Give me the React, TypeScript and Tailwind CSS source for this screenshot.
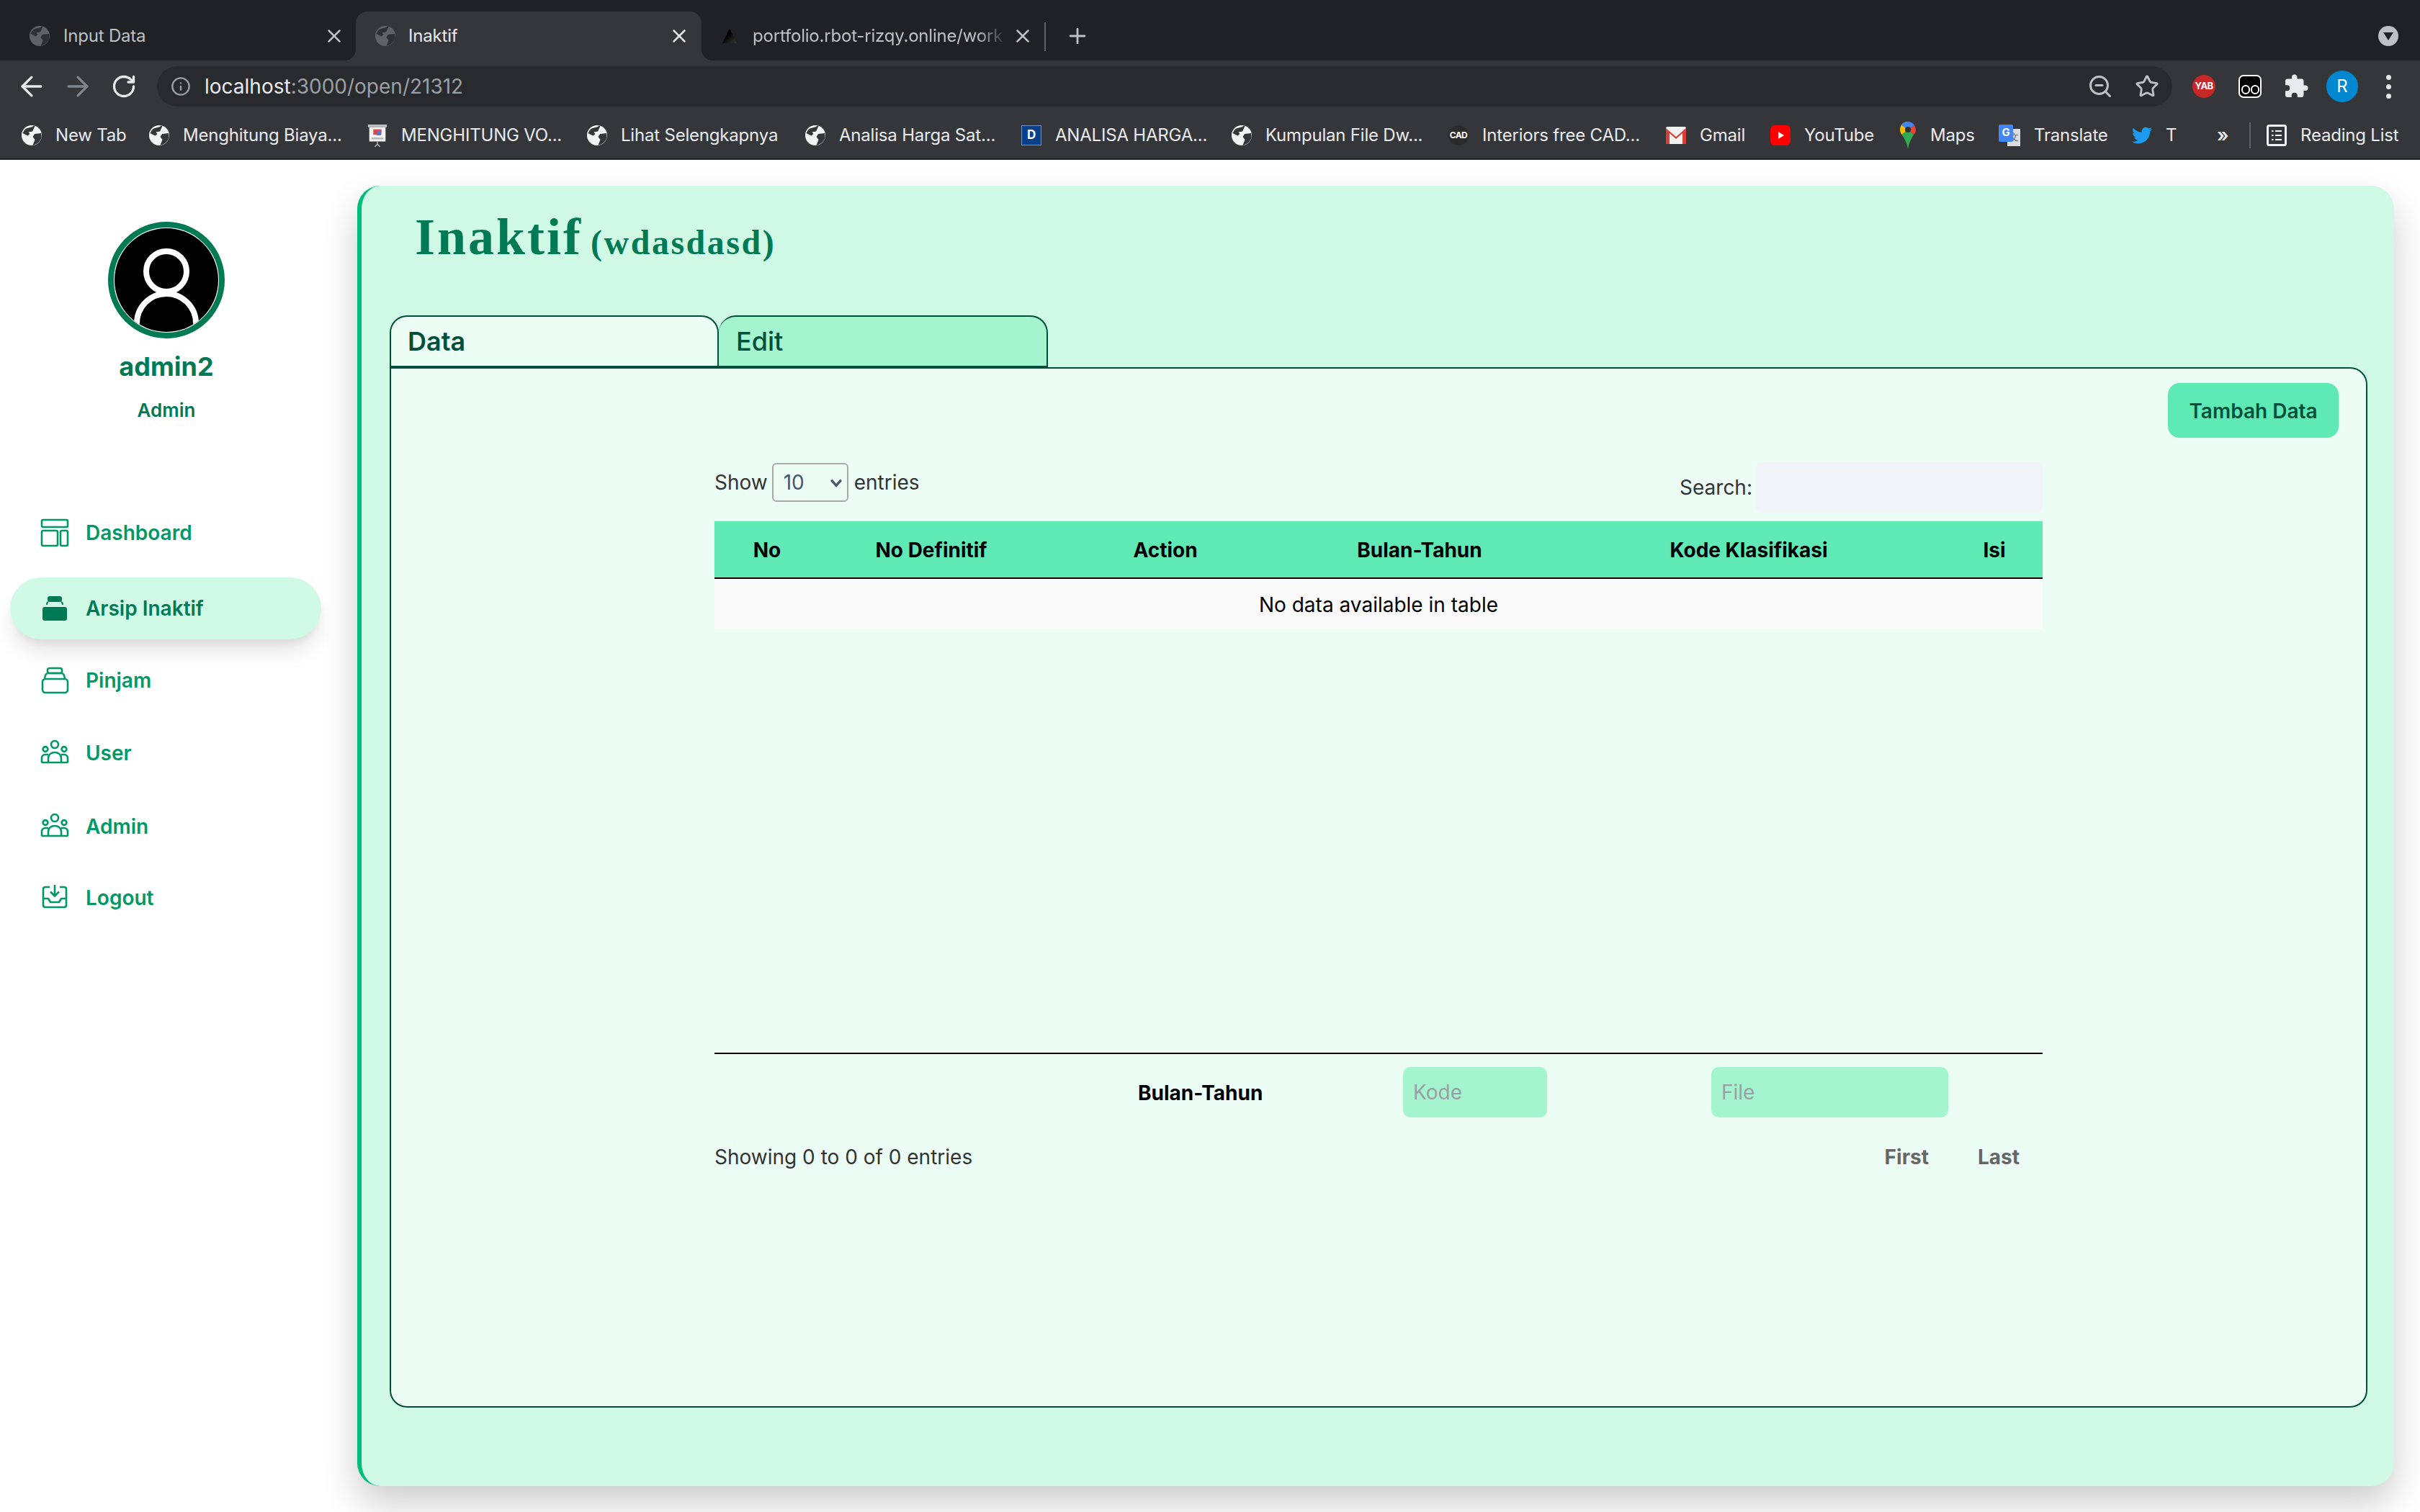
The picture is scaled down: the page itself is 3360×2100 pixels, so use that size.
import React from 'react';
import { ArrowLeft, ArrowRight, Info, Plus, RotateCw, Star, X, ZoomOut } from 'lucide-react';
import { FaTwitter } from 'react-icons/fa';

function Globe({ dim }: { dim?: boolean }) {
  return (
    <svg viewBox="0 0 28 28" className="w-[28px] h-[28px] shrink-0">
      <circle cx="14" cy="14" r="14" fill={dim ? '#5f6368' : '#f1f3f4'} />
      <path d="M17 0.6 C14 3.5 9 3 5 5.5 C3.5 7 2.5 9 1.5 11 L8.5 14.5 L11.5 12 L9.5 9.5 L15 8.5 L18.5 1 Z" fill={dim ? '#2f3033' : '#35363a'} />
      <path d="M27.2 11 L18 12 L15.5 16 L18.5 20 L15.5 27.8 C21 27 26 23 27.6 17 Z" fill={dim ? '#2f3033' : '#35363a'} />
    </svg>
  );
}

function BrowserTab({ title, active, icon, fade }: { title: string; active?: boolean; icon: React.ReactNode; fade?: boolean }) {
  return (
    <div className={active ? 'relative w-[480px] h-[68px] flex items-center gap-[18px] pl-[27px] pr-[16px] bg-[#35363a] rounded-t-[16px] text-[#e8eaed]' : fade ? 'relative w-[476px] h-[68px] flex items-center gap-[18px] pl-[25px] pr-[15px] text-[#bdc1c6]' : 'relative w-[480px] h-[68px] flex items-center gap-[19px] pl-[27px] pr-[15px] text-[#bdc1c6]'}>
      {active && <span className="absolute bottom-0 -left-[16px] w-[16px] h-[16px] bg-[radial-gradient(circle_at_0_0,#202124_16px,#35363a_16.5px)]" />}
      {active && <span className="absolute bottom-0 -right-[16px] w-[16px] h-[16px] bg-[radial-gradient(circle_at_100%_0,#202124_16px,#35363a_16.5px)]" />}
      {icon}
      <span className={fade ? 'flex-1 min-w-0 -mr-[12px] overflow-hidden whitespace-nowrap text-[24px] tracking-[-0.2px] [mask-image:linear-gradient(to_right,black_88%,transparent)]' : 'flex-1 min-w-0 overflow-hidden whitespace-nowrap text-[24px] tracking-[-0.2px]'}>{title}</span>
      <X size={30} strokeWidth={2} className="shrink-0" />
    </div>
  );
}

function TabStrip() {
  return (
    <div className="h-[84px] bg-[#202124] flex items-start pt-[16px] pl-[14px]">
      <BrowserTab title="Input Data" icon={<Globe dim />} />
      <BrowserTab title="Inaktif" active icon={<Globe dim />} />
      <BrowserTab
        title="portfolio.rbot-rizqy.online/work"
        fade
        icon={
          <svg viewBox="0 0 28 28" className="w-[28px] h-[28px] shrink-0">
            <defs>
              <linearGradient id="vercel" x1="0" y1="0" x2="1" y2="1">
                <stop offset="0.4" stopColor="#000" />
                <stop offset="1" stopColor="#3a3a3a" />
              </linearGradient>
            </defs>
            <polygon points="14,4 24,24 4,24" fill="url(#vercel)" />
          </svg>
        }
      />
      <div className="w-[2px] h-[40px] mt-[15px] bg-[#5f6368]" />
      <Plus size={34} strokeWidth={2} className="ml-[27px] mt-[17px] text-[#bdc1c6]" />
      <div className="ml-auto mr-[30px] mt-[20px] w-[28px] h-[28px] rounded-full bg-[#bdc1c6] flex items-center justify-center">
        <div className="w-0 h-0 border-l-[7px] border-r-[7px] border-t-[11px] border-l-transparent border-r-transparent border-t-[#202124]" />
      </div>
    </div>
  );
}

function Toolbar() {
  return (
    <div className="h-[64px] bg-[#35363a] pt-[8px] pl-[12px] pr-[12px] flex items-center">
      <div className="w-[64px] flex justify-center text-[#e8eaed]"><ArrowLeft size={44} strokeWidth={1.8} /></div>
      <div className="w-[64px] flex justify-center text-[#80868b]"><ArrowRight size={44} strokeWidth={1.8} /></div>
      <div className="w-[64px] flex justify-center text-[#e8eaed]"><RotateCw size={36} strokeWidth={2.2} /></div>
      <div className="ml-[14px] flex-1 h-[56px] rounded-full bg-[#292a2d] flex items-center pl-[19px] pr-[18px]">
        <Info size={28} strokeWidth={2} className="text-[#9aa0a6]" />
        <span className="ml-[19px] text-[28px] text-[#e8eaed]">localhost<span className="text-[#9aa0a6]">:3000/open/21312</span></span>
        <ZoomOut size={36} strokeWidth={2} className="ml-auto text-[#bdc1c6]" />
        <Star size={34} strokeWidth={2} className="ml-[30px] text-[#bdc1c6]" />
      </div>
      <div className="ml-[12px] w-[64px] flex justify-center">
        <div className="w-[32px] h-[32px] rounded-full bg-[#c62828] flex items-center justify-center text-[13px] font-bold text-white tracking-tighter">YAB</div>
      </div>
      <div className="w-[64px] flex justify-center">
        <div className="w-[32px] h-[32px] rounded-[7px] bg-black border-2 border-white flex items-end justify-center gap-[1px] pb-[3px]">
          <span className="w-[12px] h-[13px] rounded-full border-2 border-white" />
          <span className="w-[12px] h-[13px] rounded-full border-2 border-white" />
        </div>
      </div>
      <div className="w-[64px] flex justify-center">
        <svg viewBox="0 0 24 24" className="w-[36px] h-[36px]" fill="#e8eaed">
          <path d="M20.5 11H19V7a2 2 0 0 0-2-2h-4V3.5a2.5 2.5 0 0 0-5 0V5H4a2 2 0 0 0-2 2v3.8h1.5a2.7 2.7 0 0 1 0 5.4H2V20a2 2 0 0 0 2 2h3.8v-1.5a2.7 2.7 0 0 1 5.4 0V22H17a2 2 0 0 0 2-2v-4h1.5a2.5 2.5 0 0 0 0-5z" />
        </svg>
      </div>
      <div className="w-[64px] flex justify-center">
        <div className="w-[44px] h-[44px] rounded-full bg-[#0288d1] flex items-center justify-center text-[24px] text-white">R</div>
      </div>
      <div className="w-[64px] flex flex-col items-center gap-[6px]">
        <span className="w-[7px] h-[7px] rounded-full bg-[#e8eaed]" />
        <span className="w-[7px] h-[7px] rounded-full bg-[#e8eaed]" />
        <span className="w-[7px] h-[7px] rounded-full bg-[#e8eaed]" />
      </div>
    </div>
  );
}

const slideIcon = (
  <svg viewBox="0 0 28 34" className="w-[28px] h-[32px] shrink-0">
    <rect x="0" y="1" width="28" height="4" fill="#bdbdbd" />
    <rect x="2" y="5" width="24" height="21" fill="#f5f5f5" />
    <rect x="8" y="8" width="12" height="8" fill="#d84a4a" />
    <rect x="13" y="11" width="6" height="6" fill="#4a7bd8" />
    <rect x="5" y="20" width="18" height="3" fill="#bdbdbd" />
    <path d="M14 26 V30 M14 30 L10 34 M14 30 L18 34" stroke="#bdbdbd" strokeWidth="1.5" />
  </svg>
);

const bookmarks: { label: string; width: string; icon: React.ReactNode }[] = [
  { label: 'New Tab', width: 'w-[177px]', icon: <Globe /> },
  { label: 'Menghitung Biaya...', width: 'w-[303px]', icon: <Globe /> },
  { label: 'MENGHITUNG VO...', width: 'w-[305px]', icon: slideIcon },
  { label: 'Lihat Selengkapnya', width: 'w-[303px]', icon: <Globe /> },
  { label: 'Analisa Harga Sat...', width: 'w-[300px]', icon: <Globe /> },
  {
    label: 'ANALISA HARGA...',
    width: 'w-[292px]',
    icon: <div className="w-[28px] h-[28px] shrink-0 bg-[#0a3f8a] border border-[#6f93c9] flex items-center justify-center text-[17px] font-bold text-white">D</div>,
  },
  { label: 'Kumpulan File Dw...', width: 'w-[301px]', icon: <Globe /> },
  {
    label: 'Interiors free CAD...',
    width: 'w-[302px]',
    icon: <div className="w-[28px] h-[28px] shrink-0 rounded-full bg-[#2b2b2b] flex items-center justify-center text-[12px] font-bold text-white tracking-tighter">CAD</div>,
  },
  {
    label: 'Gmail',
    width: 'w-[145px]',
    icon: (
      <svg viewBox="0 0 28 24" className="w-[28px] h-[24px] shrink-0">
        <rect width="28" height="24" rx="2" fill="#f1f1f1" />
        <path d="M0 2 L14 14 L28 2 V24 H23 V9 L14 17 L5 9 V24 H0 Z" fill="#d93f36" />
      </svg>
    ),
  },
  {
    label: 'YouTube',
    width: 'w-[179px]',
    icon: (
      <svg viewBox="0 0 28 28" className="w-[28px] h-[28px] shrink-0">
        <rect width="28" height="28" rx="6" y="0" fill="#ff0000" />
        <polygon points="11,9 19,14 11,19" fill="#fff" />
      </svg>
    ),
  },
  {
    label: 'Maps',
    width: 'w-[138px]',
    icon: (
      <svg viewBox="2 0 24 38" className="w-[24px] h-[38px] shrink-0">
        <path d="M14 0 C7 0 3 5.5 3 11 C3 14 4 16 5.5 18 L14 11 Z" fill="#fbbc04" />
        <path d="M14 0 C10 0 7 2 5 5 L14 11 L23 5 C21 2 18 0 14 0 Z" fill="#4285f4" />
        <path d="M23 5 L14 11 L22 18 C24 16 25 14 25 11 C25 9 24 7 23 5 Z" fill="#ea4335" />
        <path d="M5.5 18 C9 23 12 28 14 38 C16 28 19 23 22 18 L14 11 Z" fill="#34a853" />
        <circle cx="14" cy="11" r="4" fill="#2f3033" />
      </svg>
    ),
  },
  {
    label: 'Translate',
    width: 'w-[185px]',
    icon: (
      <div className="relative w-[30px] h-[30px] shrink-0">
        <div className="absolute right-0 bottom-0 w-[18px] h-[24px] bg-[#dadce0] flex items-center justify-center text-[13px] text-[#5f6368]">文</div>
        <div className="absolute left-0 top-0 w-[20px] h-[24px] rounded-[2px] bg-[#4285f4] flex items-center justify-center text-[15px] font-bold text-white">G</div>
      </div>
    ),
  },
  { label: 'T', width: 'w-[118px]', icon: <FaTwitter size={28} className="shrink-0 text-[#1d9bf0]" /> },
];

function BookmarkBar() {
  return (
    <div className="h-[74px] bg-[#35363a] border-b-2 border-[#202124] pt-[7px] pl-[30px] flex items-center text-[24px] tracking-[-0.2px] text-[#e8eaed]">
      {bookmarks.map((b) => (
        <div key={b.label} className={`${b.width} flex items-center gap-[19px] shrink-0 whitespace-nowrap`}>
          {b.icon}
          <span>{b.label}</span>
        </div>
      ))}
      <span className="w-[45px] text-[26px] font-semibold">»</span>
      <div className="w-[2px] h-[36px] bg-[#5f6368]" />
      <div className="ml-[22px] flex items-center gap-[19px] whitespace-nowrap">
        <svg viewBox="0 0 28 30" className="w-[28px] h-[30px] shrink-0">
          <rect x="1.5" y="1.5" width="25" height="27" rx="2" fill="#35363a" stroke="#f1f3f4" strokeWidth="3" />
          <path d="M7 9 H9.5 M12 9 H21 M7 15 H9.5 M12 15 H21 M7 21 H9.5 M12 21 H21" stroke="#f1f3f4" strokeWidth="2" />
        </svg>
        <span>Reading List</span>
      </div>
    </div>
  );
}

const DashboardIcon = (
  <svg viewBox="0 0 40 40" className="w-[40px] h-[40px]" fill="none" stroke="currentColor" strokeWidth="2.6">
    <rect x="2" y="2" width="36" height="10" rx="2" />
    <rect x="2" y="17" width="22" height="21" rx="2" />
    <rect x="28" y="17" width="10" height="21" rx="2" />
  </svg>
);

const ArchiveSolid = (
  <svg viewBox="0 0 40 40" className="w-[40px] h-[40px]" fill="currentColor">
    <rect x="10" y="3" width="20" height="8" rx="3" />
    <rect x="3" y="18" width="34" height="19" rx="3" />
    <path d="M9 15 V14 Q9 12 11 11 M31 15 V14 Q31 12 29 11" fill="none" stroke="currentColor" strokeWidth="2" />
  </svg>
);

const ArchiveOutline = (
  <svg viewBox="0 0 40 40" className="w-[40px] h-[40px]" fill="none" stroke="currentColor" strokeWidth="2.6" strokeLinejoin="round">
    <rect x="10" y="3" width="20" height="7" rx="2.5" />
    <path d="M6 17 Q7 10 11 10 H29 Q33 10 34 17" />
    <rect x="3" y="18" width="35" height="19" rx="4" />
  </svg>
);

const UsersIcon = (
  <svg viewBox="0 0 40 40" className="w-[40px] h-[40px]" fill="none" stroke="currentColor" strokeWidth="2.6">
    <circle cx="20" cy="8" r="5" />
    <circle cx="7" cy="14.5" r="3.4" />
    <circle cx="33" cy="14.5" r="3.4" />
    <path d="M1.5 33 H38.5" />
    <path d="M11 33 V27 C11 22 15 19 20 19 C25 19 29 22 29 27 V33" />
    <path d="M2 33 V27 C2 24 4 22 7 22 H11 M38 33 V27 C38 24 36 22 33 22 H29" />
  </svg>
);

const TrayIcon = (
  <svg viewBox="0 0 40 40" className="w-[40px] h-[40px]" fill="none" stroke="currentColor" strokeWidth="2.6" strokeLinejoin="round">
    <path d="M13 5 H7 Q4 5 4 8 V30 Q4 33 7 33 H33 Q36 33 36 30 V8 Q36 5 33 5 H27" />
    <path d="M20 2 V17 M14 11.5 L20 17.5 L26 11.5" />
    <path d="M4 21 H11 L14 26 H26 L29 21 H36" />
  </svg>
);

const navItems = [
  { label: 'Dashboard', icon: DashboardIcon, cls: 'mt-0' },
  { label: 'Arsip Inaktif', icon: ArchiveSolid, active: true, cls: 'mt-[19px]' },
  { label: 'Pinjam', icon: ArchiveOutline, cls: 'mt-[14px]' },
  { label: 'User', icon: UsersIcon, cls: 'mt-[15px]' },
  { label: 'Admin', icon: UsersIcon, cls: 'mt-[16px]' },
  { label: 'Logout', icon: TrayIcon, cls: 'mt-[13px]' },
];

function Sidebar() {
  return (
    <aside className="w-[462px] shrink-0 flex flex-col items-center pt-[86px] text-emerald-700">
      <div className="w-[162px] h-[162px] rounded-full border-[8px] border-emerald-700 bg-white p-[1px] overflow-hidden">
        <svg viewBox="0 0 144 144" className="w-full h-full rounded-full bg-black" fill="none" stroke="#fff" strokeWidth="8">
          <circle cx="72" cy="60" r="28" />
          <path d="M31 140 V132 A41 41 0 0 1 113 132 V140" />
        </svg>
      </div>
      <div className="mt-[19px] text-[36px] leading-[40px] font-bold">admin2</div>
      <div className="mt-[21px] text-[26px] leading-[40px] font-semibold">Admin</div>
      <nav className="mt-[107px] w-[432px] self-start ml-[14px]">
        {navItems.map((item) => (
          <a
            key={item.label}
            className={
              item.active
                ? `${item.cls} h-[86px] flex items-center gap-[23px] pl-[42px] rounded-full bg-emerald-100 text-emerald-700 shadow-[0_20px_30px_-6px_rgba(0,0,0,0.12),0_8px_12px_-4px_rgba(0,0,0,0.06)] text-[28px] font-semibold`
                : `${item.cls} h-[86px] flex items-center gap-[23px] pl-[42px] text-emerald-600 text-[28px] font-semibold`
            }
          >
            {item.icon}
            {item.label}
          </a>
        ))}
      </nav>
    </aside>
  );
}

const columns = [
  { label: 'No', cls: 'w-[146px]' },
  { label: 'No Definitif', cls: 'w-[310px]' },
  { label: 'Action', cls: 'w-[340px]' },
  { label: 'Bulan-Tahun', cls: 'w-[366px]' },
  { label: 'Kode Klasifikasi', cls: 'w-[548px]' },
  { label: 'Isi', cls: 'w-[134px]' },
];

function DataTable() {
  return (
    <div className="ml-[449px] w-[1844px] mt-[34px] text-[28px]">
      <div className="h-[82px] flex items-start justify-between text-[#333]">
        <div className="flex items-center h-[56px]">
          Show
          <div className="relative ml-[6px] mr-[8px]">
            <select className="appearance-none w-[106px] h-[54px] rounded-[6px] border-2 border-[#a9a9a9] bg-transparent pl-[14px] text-[28px] text-[#475569]">
              <option>10</option>
            </select>
            <svg viewBox="0 0 16 16" className="absolute right-[8px] top-[18px] w-[18px] h-[18px]" fill="none" stroke="#475569" strokeWidth="3">
              <path d="M2 5 L8 12 L14 5" />
            </svg>
          </div>
          entries
        </div>
        <label className="flex items-center">
          Search:
          <input className="ml-[5px] w-[398px] h-[70px] rounded-[8px] bg-slate-100" />
        </label>
      </div>
      <div className="flex h-[80px] pt-[1px] bg-emerald-300 border-b-2 border-black font-bold text-black">
        {columns.map((c) => (
          <div key={c.label} className={`${c.cls} flex items-center justify-center`}>{c.label}</div>
        ))}
      </div>
      <div className="h-[70px] pt-[1px] bg-neutral-50 flex items-center justify-center text-black">No data available in table</div>
      <div className="h-[588px]" />
      <div className="border-t-2 border-black pt-[18px] flex items-center">
        <div className="w-[956px] pl-[588px] pt-[1px] font-bold text-black">Bulan-Tahun</div>
        <input placeholder="Kode" className="w-[200px] h-[70px] rounded-[10px] bg-emerald-200 px-[14px] placeholder:text-[#9aa0a6]" />
        <input placeholder="File" className="ml-[228px] w-[329px] h-[70px] rounded-[10px] bg-emerald-200 px-[14px] placeholder:text-[#9aa0a6]" />
      </div>
      <div className="mt-[35px] h-[40px] flex items-center justify-between text-[#333]">
        <span>Showing 0 to 0 of 0 entries</span>
        <div className="flex gap-[68px] pr-[32px] font-bold text-[#666]">
          <span>First</span>
          <span>Last</span>
        </div>
      </div>
    </div>
  );
}

function MainCard() {
  return (
    <main className="flex-1 ml-[34px] mr-[36px] my-[36px] rounded-[32px] border-l-[6px] border-emerald-500 bg-emerald-100 shadow-[0_24px_50px_0_rgba(0,0,0,0.2)]">
      <h1 className="pl-[74px] pt-[31px] text-[72px] leading-[80px] font-bold tracking-[3px] text-emerald-700 font-['Liberation_Serif',serif]">
        Inaktif <span className="-ml-[10px] text-[48px] tracking-[2.5px]">(wdasdasd)</span>
      </h1>
      <div className="mt-[61px] ml-[39px] flex relative z-10">
        <div className="w-[457px] h-[74px] rounded-t-[24px] border-2 border-b-4 border-emerald-900 bg-emerald-50 pl-[23px] flex items-center text-[36px] font-semibold text-emerald-900">Data</div>
        <div className="w-[457px] h-[74px] rounded-t-[24px] border-2 border-l-0 border-b-4 border-emerald-900 bg-emerald-200 pl-[24px] flex items-center text-[36px] font-medium text-emerald-900">Edit</div>
      </div>
      <section className="-mt-[2px] ml-[39px] mr-[37px] h-[1445px] rounded-[24px] rounded-tl-none border-2 border-emerald-900 bg-emerald-50 pt-[20px]">
        <div className="flex justify-end pr-[38px]">
          <button className="w-[237px] h-[76px] pt-[2px] rounded-[16px] bg-emerald-300 text-[28px] font-semibold text-emerald-900">Tambah Data</button>
        </div>
        <DataTable />
      </section>
    </main>
  );
}

export default function App() {
  return (
    <div className="w-screen h-screen overflow-hidden flex flex-col bg-white font-['Inter',sans-serif]">
      <TabStrip />
      <Toolbar />
      <BookmarkBar />
      <div className="flex flex-1 min-h-0">
        <Sidebar />
        <MainCard />
      </div>
    </div>
  );
}
